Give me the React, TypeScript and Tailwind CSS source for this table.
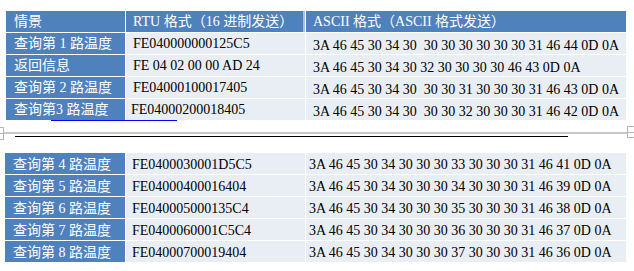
import React from "react";

const FONT = "font-['Liberation_Serif','Noto_Sans_CJK_SC',serif]";

const topRows = [
    {name: "查询第 1 路温度", rtu: "FE040000000125C5", ascii: "3A 46 45 30 34 30  30 30 30 30 30 30 31 46 44 0D 0A"},
    {name: "返回信息", rtu: "FE 04 02 00 00 AD 24", ascii: "3A 46 45 30 34 30 32 30 30 30 30 46 43 0D 0A"},
    {name: "查询第 2 路温度", rtu: "FE04000100017405", ascii: "3A 46 45 30 34 30  30 30 31 30 30 30 31 46 43 0D 0A"},
    {name: "查询第3 路温度", rtu: "FE04000200018405", ascii: "3A 46 45 30 34 30  30 30 32 30 30 30 31 46 42 0D 0A", shift: true},
];

const bottomRows = [
    {name: "查询第 4 路温度", rtu: "FE0400030001D5C5", ascii: "3A 46 45 30 34 30 30 30 33 30 30 30 31 46 41 0D 0A"},
    {name: "查询第 5 路温度", rtu: "FE04000400016404", ascii: "3A 46 45 30 34 30 30 30 34 30 30 30 31 46 39 0D 0A"},
    {name: "查询第 6 路温度", rtu: "FE040005000135C4", ascii: "3A 46 45 30 34 30 30 30 35 30 30 30 31 46 38 0D 0A"},
    {name: "查询第 7 路温度", rtu: "FE0400060001C5C4", ascii: "3A 46 45 30 34 30 30 30 36 30 30 30 31 46 37 0D 0A"},
    {name: "查询第 8 路温度", rtu: "FE04000700019404", ascii: "3A 46 45 30 34 30 30 30 37 30 30 30 31 46 36 0D 0A"},
];

export default function App() {
    return (
        <div className={`w-[634px] h-[271px] overflow-hidden bg-white text-[14px] leading-none whitespace-pre ${FONT}`}>
            {/* top table */}
            <div className="relative ml-[6px] mt-[11px] flex flex-col gap-px">
                <div className="flex h-[21px] gap-px text-white">
                    <div className="flex w-[119px] items-center bg-[#4f81bd] pl-2">情景</div>
                    <div className="flex w-[179px] items-center border-r-2 border-[#a8bfde] bg-[#4f81bd] pl-[7px]">RTU 格式（16 进制发送）</div>
                    <div className="flex w-[320px] items-center bg-[#4f81bd] pl-[7px]">ASCII 格式（ASCII 格式发送）</div>
                </div>
                {topRows.map((r) => (
                    <div key={r.rtu} className="flex h-[21px] gap-px">
                        <div className="flex w-[119px] items-center bg-[#4f81bd] pl-2 text-white">{r.name}</div>
                        <div className={`flex w-[179px] items-center bg-[#e9edf4] text-black ${r.shift ? "pl-[5px]" : "pl-[7px]"}`}>{r.rtu}</div>
                        <div className="flex w-[320px] items-center bg-[#e9edf4] pl-[7px] pt-[4px] text-black">{r.ascii}</div>
                    </div>
                ))}
                <div className="absolute left-[45px] top-[109px] h-px w-[126px] bg-[#0000ff]"/>
            </div>

            {/* section break */}
            <div className="relative">
                <div className="mt-[12px] h-[2px] w-full bg-[#c8c8c8]"/>
                <div className="ml-[15px] mt-[2px] h-px w-[553px] bg-black"/>
                <div className="absolute left-0 top-[-5px] flex h-[13px] w-[4px] flex-col border border-l-0 border-[#b4b4b4] bg-white">
                    <div className="mt-[5px] h-px bg-[#b4b4b4]"/>
                </div>
                <div className="absolute right-0 top-[-6px] flex h-[12px] w-[7px] flex-col border border-r-0 border-[#b4b4b4] bg-white">
                    <div className="mt-[5px] h-px bg-[#b4b4b4]"/>
                </div>
            </div>

            {/* bottom table */}
            <div className="ml-[5px] mt-[16px] flex flex-col gap-px">
                {bottomRows.map((r) => (
                    <div key={r.rtu} className="flex h-[21px] gap-px">
                        <div className="flex w-[120px] items-center bg-[#4f81bd] pl-2 pt-[2px] text-white">{r.name}</div>
                        <div className="flex w-[179px] items-center bg-[#e9edf4] pl-[6px] pt-[2px] text-black">{r.rtu}</div>
                        <div className="flex w-[320px] items-center bg-[#e9edf4] pl-[3px] pt-[2px] text-black">{r.ascii}</div>
                    </div>
                ))}
            </div>
        </div>
    );
}
